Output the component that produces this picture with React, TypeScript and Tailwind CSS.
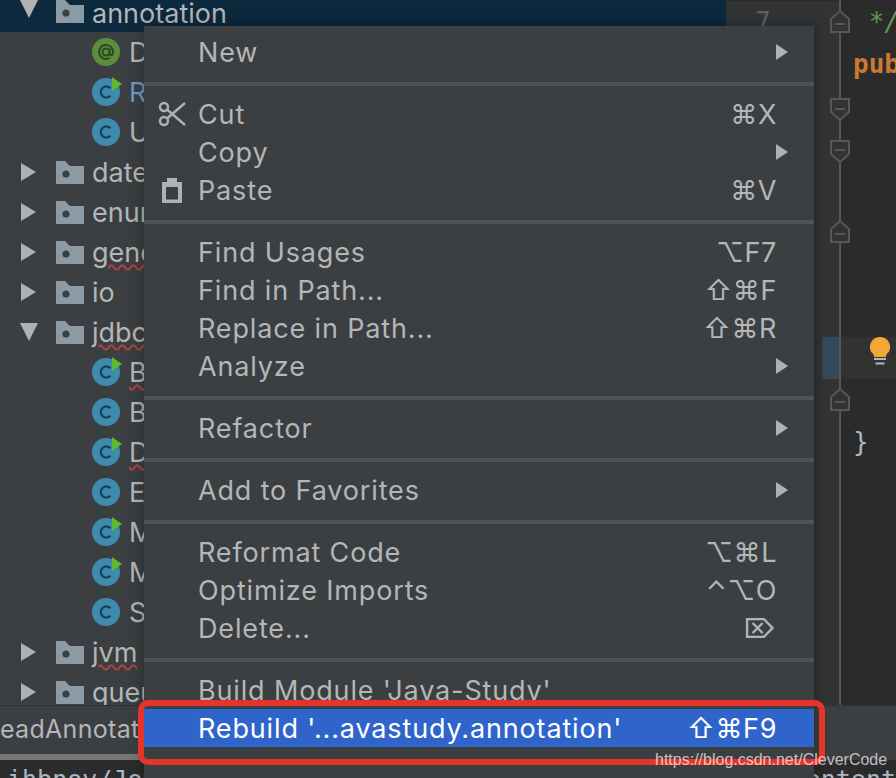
import React from "react";

const UI = { fontFamily: 'Inter, "DejaVu Sans", sans-serif' };
const MONO = { fontFamily: '"DejaVu Sans Mono", monospace' };

function Arrow({ down = false, className = "" }: { down?: boolean; className?: string }) {
  return (
    <svg width="18" height="18" viewBox="0 0 18 18" className={className}>
      {down ? <polygon points="0,0 18,0 9,18" fill="#afb1b3" /> : <polygon points="1,0 16,9 1,18" fill="#afb1b3" />}
    </svg>
  );
}

function Folder() {
  return (
    <svg width="28" height="23" viewBox="0 0 28 23" className="shrink-0">
      <path d="M0 0h9l5 5h14v18H0z" fill="#8c9aa5" />
      <circle cx="10" cy="13" r="3.6" fill="#3c3f41" />
    </svg>
  );
}

function ClassIcon({ kind = "c", run = false }: { kind?: "c" | "a"; run?: boolean }) {
  const fill = kind === "a" ? "#5a8f3c" : "#3f8bad";
  return (
    <svg width="32" height="32" viewBox="0 0 32 32" className="shrink-0 overflow-visible">
      <circle cx="14" cy="16" r="14" fill={fill} />
      {kind === "a" ? (
        <g fill="none" stroke="#2c4a28" strokeWidth="2">
          <circle cx="14" cy="16" r="3.5" />
          <path d="M17.5 12.5v5.5c0 2 3.5 2 3.5-2a7 7 0 1 0-3 5.7" />
        </g>
      ) : (
        <path d="M18.5 12.2a5.6 5.6 0 1 0 0 7.6" fill="none" stroke="#1d3f56" strokeWidth="2.2" />
      )}
      {run && <polygon points="20,1 30,8 20,15" fill="#5fb832" />}
    </svg>
  );
}

const folders: { name: string; open?: boolean; squiggle?: boolean; files?: { n: string; run?: boolean; s?: boolean }[] }[] = [
  { name: "date" },
  { name: "enum" },
  { name: "gene", squiggle: true },
  { name: "io" },
  {
    name: "jdbc",
    open: true,
    squiggle: true,
    files: [
      { n: "B", run: true, s: true },
      { n: "B" },
      { n: "D", run: true, s: true },
      { n: "E" },
      { n: "M", run: true },
      { n: "M", run: true },
      { n: "S" },
    ],
  },
  { name: "jvm", squiggle: true },
  { name: "queue" },
];

function FolderRow({ name, open, squiggle }: { name: string; open?: boolean; squiggle?: boolean }) {
  return (
    <div className="flex h-10 items-center pl-5 text-[27px] text-[#b4b6b8]">
      <Arrow down={open} className="shrink-0" />
      <div className="ml-[18px]">
        <Folder />
      </div>
      <span
        className={
          "mt-[2px] ml-2 whitespace-nowrap " +
          (squiggle ? "underline decoration-wavy decoration-[#b04442] decoration-[1.5px] underline-offset-[2px]" : "")
        }
      >
        {name}
      </span>
    </div>
  );
}

function FileRow({ n, run, s, c, kind }: { n: string; run?: boolean; s?: boolean; c?: string; kind?: "a" | "c" }) {
  return (
    <div className="flex h-10 items-center pl-[92px] text-[27px] text-[#b4b6b8]">
      <ClassIcon kind={kind} run={run} />
      <span
        className={"mt-[2px] ml-[5px] " + (s ? "underline decoration-wavy decoration-[#b04442] decoration-[1.5px] underline-offset-[2px]" : "")}
        style={c ? { color: c } : undefined}
      >
        {n}
      </span>
    </div>
  );
}

function Scissors() {
  return (
    <svg width="28" height="26" viewBox="0 0 28 26" fill="none" stroke="#afb1b3" strokeWidth="2.4">
      <circle cx="6" cy="6" r="4" />
      <circle cx="6" cy="20" r="4" />
      <path d="M9 8.5 27 24M9 17.5 27 2" />
    </svg>
  );
}

function Clipboard() {
  return (
    <svg width="20" height="25" viewBox="0 0 20 25" className="ml-1">
      <path d="M0 4h5V0h10v4h5v21H0z" fill="#afb1b3" />
      <rect x="4" y="9" width="12" height="12.5" fill="#3c3f41" />
    </svg>
  );
}

function MenuRow({
  label,
  shortcut,
  sub,
  icon,
  active,
}: {
  label: string;
  shortcut?: string;
  sub?: boolean;
  icon?: React.ReactNode;
  active?: boolean;
}) {
  return (
    <div className={"flex h-[38px] items-center text-[27px] " + (active ? "bg-[#2f65ca] text-white" : "text-[#b4b6b8]")}>
      <div className="flex w-[54px] shrink-0 items-center pl-[14px]">{icon}</div>
      <span className="mt-[2px] tracking-[0.85px] whitespace-nowrap">{label}</span>
      {shortcut && <span className="mt-[2px] mr-[37px] ml-auto tracking-[0.6px] whitespace-nowrap">{shortcut}</span>}
      {sub && (
        <svg width="12" height="16" viewBox="0 0 12 16" className="mr-[26px] ml-auto">
          <polygon points="0,0 12,8 0,16" fill="#afb1b3" />
        </svg>
      )}
    </div>
  );
}

function Group({ children, last }: { children: React.ReactNode; last?: boolean }) {
  return <div className={"pt-[9px] " + (last ? "" : "pb-[11px] border-b-4 border-[#505254]")}>{children}</div>;
}

function CodeRow({ children, num, active }: { children?: React.ReactNode; num?: string; active?: boolean }) {
  return (
    <div className="flex h-[42px] items-center text-[26px]" style={MONO}>
      <div className="flex h-full w-[114px] shrink-0 items-center bg-[#313335]">
        <span className="ml-[29px] text-[#606366]">{num}</span>
        {active && <div className="ml-auto h-full w-[18px] bg-[#34495a]" />}
      </div>
      <div className={"flex h-full flex-1 items-center pl-[13px] " + (active ? "bg-[#323232]" : "")}>{children}</div>
    </div>
  );
}

function FoldMarks() {
  const up = (y: number) => `M831 ${y + 8}l9-8 9 8v13h-18z`;
  const down = (y: number) => `M831 ${y}h18v13l-9 8-9-8z`;
  const marks = [
    { d: up(11), y: 24 },
    { d: down(99), y: 109 },
    { d: down(141), y: 150 },
    { d: up(221), y: 234 },
    { d: up(389), y: 402 },
  ];
  return (
    <svg width="30" height="705" viewBox="825 0 30 705" className="absolute top-0 left-[99px]">
      <path d="M840 0v705" stroke="#555759" strokeWidth="2" />
      {marks.map((m, i) => (
        <g key={i}>
          <path d={m.d} fill="#313335" stroke="#555759" strokeWidth="2" />
          <path d={`M835 ${m.y}h10`} stroke="#555759" strokeWidth="2" />
        </g>
      ))}
    </svg>
  );
}

export default function App() {
  return (
    <div className="relative flex h-[778px] w-[896px] flex-col overflow-hidden bg-[#3c3f41]" style={UI}>
      {/* top area */}
      <div className="flex h-[705px] shrink-0">
        {/* project tree */}
        <div className="w-[726px] shrink-0 overflow-hidden bg-[#3c3f41]">
          <div className="flex h-8 items-start bg-[#0d293e] pl-5 text-[27px] leading-[27px] text-[#b4b6b8]">
            <Arrow down className="shrink-0" />
            <div className="ml-[18px]">
              <Folder />
            </div>
            <span className="ml-2">annotation</span>
          </div>
          <FileRow n="D" kind="a" />
          <FileRow n="R" run c="#6e9ac6" />
          <FileRow n="U" />
          {folders.map((f) => (
            <React.Fragment key={f.name}>
              <FolderRow name={f.name} open={f.open} squiggle={f.squiggle} />
              {f.files?.map((x, i) => <FileRow key={i} n={x.n} run={x.run} s={x.s} />)}
            </React.Fragment>
          ))}
        </div>
        {/* editor */}
        <div className="relative flex-1 overflow-hidden bg-[#2b2b2b] pt-px">
          <CodeRow num="7">
            <span className="text-[#629755] italic">&nbsp;*/</span>
          </CodeRow>
          <CodeRow>
            <span className="font-bold text-[#cc7832]">pub</span>
          </CodeRow>
          <CodeRow />
          <CodeRow />
          <CodeRow />
          <CodeRow />
          <CodeRow />
          <CodeRow />
          <CodeRow active>
            <svg width="20" height="28" viewBox="0 0 20 28" className="-mt-[14px] ml-[17px]">
              <path d="M10 0a10 10 0 0 1 6 18v2H4v-2A10 10 0 0 1 10 0z" fill="#f2a832" />
              <path d="M4 22h12M5.5 26.5h9" stroke="#b4b6b8" strokeWidth="2" />
            </svg>
          </CodeRow>
          <CodeRow />
          <CodeRow>
            <span className="text-[#a9b7c6]">{"}"}</span>
          </CodeRow>
          <CodeRow />
          <CodeRow />
          <CodeRow />
          <CodeRow />
          <CodeRow />
          <CodeRow />
          <FoldMarks />
        </div>
      </div>

      {/* bottom tool window */}
      <div className="flex h-[49px] shrink-0 items-center border-t border-[#323232] bg-[#3c3f41] text-[25px] tracking-[0.3px] text-[#b4b6b8]">
        <span className="whitespace-nowrap">eadAnnotation</span>
      </div>
      <div className="flex h-[6px] shrink-0">
        <div className="w-[200px] bg-[#73777a]" />
      </div>
      <div className="flex flex-1 items-start justify-between overflow-hidden bg-[#2b2b2b] pt-[8px] text-[25px] leading-[24px] text-[#a9b7c6]" style={MONO}>
        <span className="pl-[7px] whitespace-nowrap">ihbnov/Jo</span>
        <span className="whitespace-nowrap">ontent</span>
      </div>

      {/* context menu */}
      <div className="absolute top-[26px] left-[144px] h-[760px] w-[670px] bg-[#3c3f41] pt-[7px] shadow-[0_0_14px_rgba(0,0,0,0.35)]">
        <div className="-mt-[9px]">
          <Group>
            <MenuRow label="New" sub />
          </Group>
          <Group>
            <MenuRow label="Cut" shortcut="⌘X" icon={<Scissors />} />
            <MenuRow label="Copy" sub />
            <MenuRow label="Paste" shortcut="⌘V" icon={<Clipboard />} />
          </Group>
          <Group>
            <MenuRow label="Find Usages" shortcut="⌥F7" />
            <MenuRow label="Find in Path..." shortcut="⇧⌘F" />
            <MenuRow label="Replace in Path..." shortcut="⇧⌘R" />
            <MenuRow label="Analyze" sub />
          </Group>
          <Group>
            <MenuRow label="Refactor" sub />
          </Group>
          <Group>
            <MenuRow label="Add to Favorites" sub />
          </Group>
          <Group>
            <MenuRow label="Reformat Code" shortcut="⌥⌘L" />
            <MenuRow label="Optimize Imports" shortcut="⌃⌥O" />
            <MenuRow label="Delete..." shortcut="⌦" />
          </Group>
          <Group last>
            <MenuRow label="Build Module 'Java-Study'" />
            <MenuRow label="Rebuild '...avastudy.annotation'" shortcut="⇧⌘F9" active />
          </Group>
        </div>
      </div>

      {/* red annotation box */}
      <div className="pointer-events-none absolute top-[700px] left-[138px] h-[65px] w-[687px] rounded-[10px] border-[6px] border-[#e5352a]" />

      {/* watermark */}
      <span
        className="absolute top-[748px] left-[655px] text-[16px] whitespace-nowrap text-white/70"
        style={{ fontFamily: '"Liberation Sans", sans-serif' }}
      >
        https://blog.csdn.net/CleverCode
      </span>
    </div>
  );
}
